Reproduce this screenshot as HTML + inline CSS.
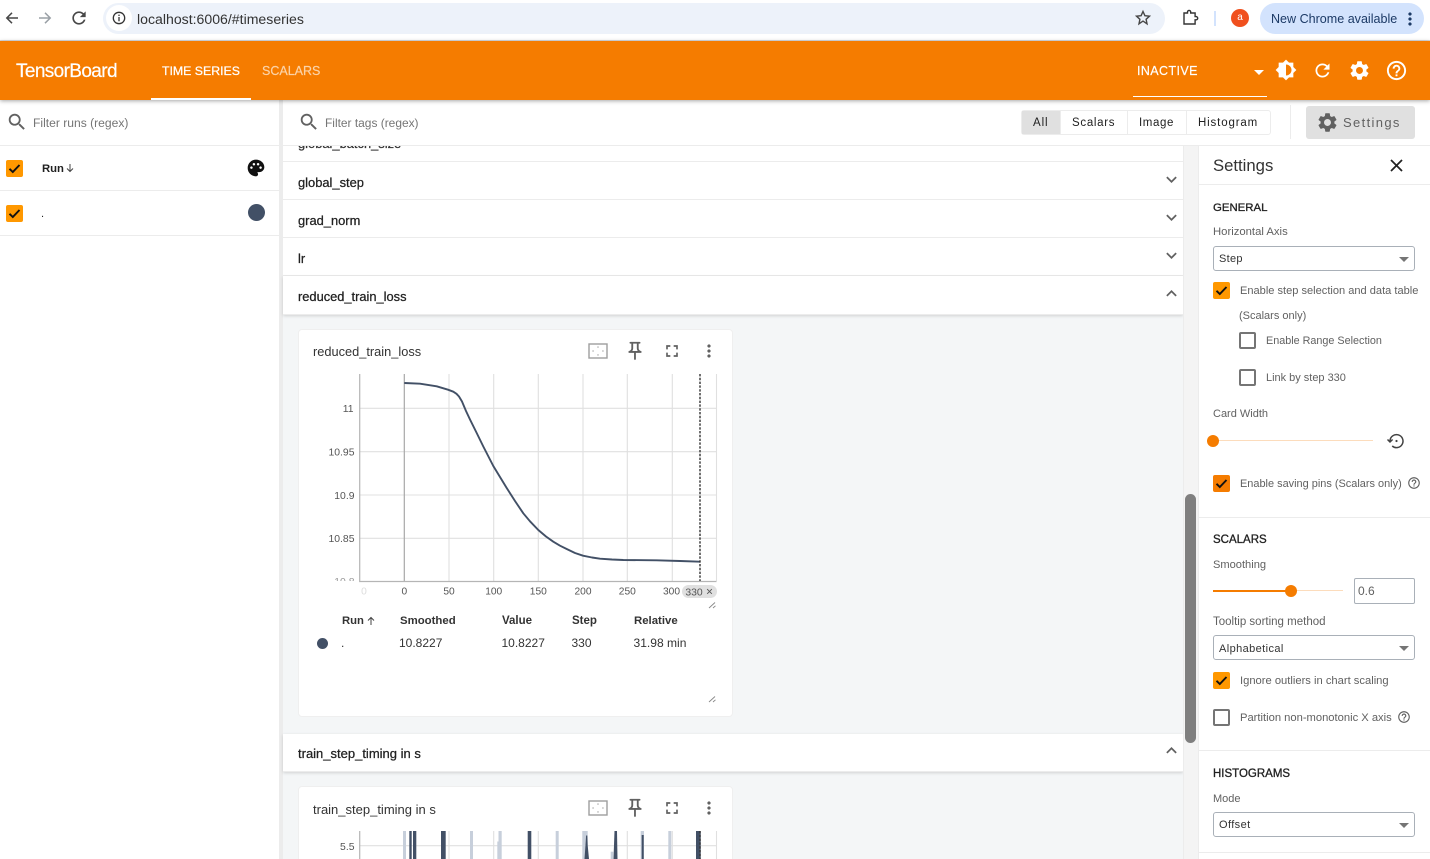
<!DOCTYPE html>
<html><head><meta charset="utf-8"><title>TensorBoard</title>
<style>
html,body{margin:0;padding:0;width:1430px;height:859px;overflow:hidden;background:#fff}
body{font-family:"Liberation Sans",sans-serif;color:#212121;position:relative;filter:blur(.3px)}
div,span.t{position:absolute;box-sizing:border-box}
.t{position:absolute;white-space:nowrap;line-height:20px;font-size:12px;margin-top:1px}
.g{color:#616161}
.b{font-weight:bold}
.ic{position:absolute;display:block}
.cb{position:absolute;width:17px;height:17px;border-radius:2px;background:#ff9800}
.cb svg{position:absolute;left:0;top:0}
.un{position:absolute;width:17px;height:17px;border-radius:2px;border:2px solid #757575;background:#fff}
.sec{left:283px;width:900px;background:#fff;border-bottom:1px solid #ececec}
.card{background:#fff;border:1px solid #efefef;border-radius:4px;left:298px;width:435px}
.sel{background:#fff;border:1px solid #a9b0b8;border-radius:3px;left:1213px;width:202px;height:25px}
.sel:after{content:"";position:absolute;right:5px;top:10px;border-left:5px solid transparent;border-right:5px solid transparent;border-top:5px solid #757575}
</style></head><body>
<svg width="0" height="0" style="position:absolute"><defs>
<symbol id="search" viewBox="0 0 24 24"><path d="M15.5 14h-.79l-.28-.27C15.41 12.59 16 11.11 16 9.5 16 5.91 13.09 3 9.5 3S3 5.91 3 9.5 5.91 16 9.5 16c1.61 0 3.09-.59 4.23-1.57l.27.28v.79l5 4.99L20.49 19l-4.99-5zm-6 0C7.01 14 5 11.99 5 9.5S7.01 5 9.5 5 14 7.01 14 9.5 11.99 14 9.5 14z"/></symbol>
<symbol id="gear" viewBox="0 0 24 24"><path d="M19.14 12.94c.04-.3.06-.61.06-.94 0-.32-.02-.64-.07-.94l2.03-1.58c.18-.14.23-.41.12-.61l-1.92-3.32c-.12-.22-.37-.29-.59-.22l-2.39.96c-.5-.38-1.03-.7-1.62-.94l-.36-2.54c-.04-.24-.24-.41-.48-.41h-3.84c-.24 0-.43.17-.47.41l-.36 2.54c-.59.24-1.13.57-1.62.94l-2.39-.96c-.22-.08-.47 0-.59.22L2.74 8.87c-.12.21-.08.47.12.61l2.03 1.58c-.05.3-.09.63-.09.94s.02.64.07.94l-2.03 1.58c-.18.14-.23.41-.12.61l1.92 3.32c.12.22.37.29.59.22l2.39-.96c.5.38 1.03.7 1.62.94l.36 2.54c.05.24.24.41.48.41h3.84c.24 0 .44-.17.47-.41l.36-2.54c.59-.24 1.13-.56 1.62-.94l2.39.96c.22.08.47 0 .59-.22l1.92-3.32c.12-.22.07-.47-.12-.61l-2.01-1.58zM12 15.6c-1.98 0-3.6-1.62-3.6-3.6s1.62-3.6 3.6-3.6 3.6 1.62 3.6 3.6-1.62 3.6-3.6 3.6z"/></symbol>
<symbol id="refresh" viewBox="0 0 24 24"><path d="M17.65 6.35C16.2 4.9 14.21 4 12 4c-4.42 0-7.99 3.58-7.99 8s3.57 8 7.99 8c3.73 0 6.84-2.55 7.73-6h-2.08c-.82 2.33-3.04 4-5.65 4-3.31 0-6-2.69-6-6s2.69-6 6-6c1.66 0 3.14.69 4.22 1.78L13 11h7V4l-2.35 2.35z"/></symbol>
<symbol id="help" viewBox="0 0 24 24"><path d="M11 18h2v-2h-2v2zm1-16C6.48 2 2 6.48 2 12s4.48 10 10 10 10-4.48 10-10S17.52 2 12 2zm0 18c-4.41 0-8-3.59-8-8s3.59-8 8-8 8 3.59 8 8-3.59 8-8 8zm0-14c-2.21 0-4 1.79-4 4h2c0-1.1.9-2 2-2s2 .9 2 2c0 2-3 1.75-3 5h2c0-2.25 3-2.5 3-5 0-2.21-1.79-4-4-4z"/></symbol>
<symbol id="bright" viewBox="0 0 24 24"><path d="M20 15.31L23.31 12 20 8.69V4h-4.69L12 .69 8.69 4H4v4.69L.69 12 4 15.31V20h4.69L12 23.31 15.31 20H20v-4.69zM12 18V6c3.31 0 6 2.69 6 6s-2.69 6-6 6z"/></symbol>
<symbol id="palette" viewBox="0 0 24 24"><path d="M12 2C6.49 2 2 6.49 2 12s4.49 10 10 10c1.38 0 2.5-1.12 2.5-2.5 0-.61-.23-1.2-.64-1.67-.08-.1-.13-.21-.13-.33 0-.28.22-.5.5-.5H16c3.31 0 6-2.69 6-6 0-4.96-4.49-9-10-9zm5.5 11c-.83 0-1.5-.67-1.5-1.5s.67-1.5 1.5-1.5 1.5.67 1.5 1.5-.67 1.5-1.5 1.5zm-3-4c-.83 0-1.5-.67-1.5-1.5S13.67 6 14.5 6s1.5.67 1.5 1.5S15.33 9 14.5 9zM5 11.5c0-.83.67-1.5 1.5-1.5s1.5.67 1.5 1.5S7.33 13 6.5 13 5 12.33 5 11.5zm6-4c0 .83-.67 1.5-1.5 1.5S8 8.33 8 7.5 8.67 6 9.5 6s1.5.67 1.5 1.5z"/></symbol>
<symbol id="close" viewBox="0 0 24 24"><path d="M19 6.41 17.59 5 12 10.59 6.41 5 5 6.41 10.59 12 5 17.59 6.41 19 12 13.41 17.59 19 19 17.59 13.41 12z"/></symbol>
<symbol id="more" viewBox="0 0 24 24"><path d="M16.59 8.59 12 13.17 7.41 8.59 6 10l6 6 6-6z"/></symbol>
<symbol id="less" viewBox="0 0 24 24"><path d="M12 8l-6 6 1.41 1.41L12 10.83l4.59 4.58L18 14z"/></symbol>
<symbol id="pin" viewBox="0 0 24 24"><path d="M14 4v5c0 1.12.37 2.16 1 3H9c.65-.86 1-1.9 1-3V4h4m3-2H7c-.55 0-1 .45-1 1s.45 1 1 1h1v5c0 1.66-1.34 3-3 3v2h5.97v7l1 1 1-1v-7H19v-2c-1.66 0-3-1.34-3-3V4h1c.55 0 1-.45 1-1s-.45-1-1-1z"/></symbol>
<symbol id="full" viewBox="0 0 24 24"><path d="M7 14H5v5h5v-2H7v-3zm-2-4h2V7h3V5H5v5zm12 7h-3v2h5v-5h-2v3zM14 5v2h3v3h2V5h-5z"/></symbol>
<symbol id="vert" viewBox="0 0 24 24"><path d="M12 8c1.1 0 2-.9 2-2s-.9-2-2-2-2 .9-2 2 .9 2 2 2zm0 2c-1.1 0-2 .9-2 2s.9 2 2 2 2-.9 2-2-.9-2-2-2zm0 6c-1.1 0-2 .9-2 2s.9 2 2 2 2-.9 2-2-.9-2-2-2z"/></symbol>
<symbol id="fit" viewBox="0 0 20 16"><rect x="1" y="1" width="18" height="14" fill="none" stroke="#9e9e9e" stroke-width="1.4"/><path d="M10 3l1 1.5H9zM10 13l1-1.5H9zM4 8l1.5-1v2zM16 8l-1.5-1v2z" fill="#9e9e9e"/></symbol>
<symbol id="check" viewBox="0 0 17 17"><path d="M3.5 8.8l3.3 3.2 6.7-7" fill="none" stroke="#111" stroke-width="1.9"/></symbol>
</defs></svg>

<!-- Chrome bar -->
<div style="left:0;top:0;width:1430px;height:41px;background:#fff;border-bottom:1px solid #dadce0"></div>
<svg class="ic" style="left:3px;top:9px" width="18" height="18" viewBox="0 0 18 18" fill="none" stroke="#474747" stroke-width="1.5"><path d="M15 9H4M9 3.8L3.8 9 9 14.2"/></svg>
<svg class="ic" style="left:36px;top:9px" width="18" height="18" viewBox="0 0 18 18" fill="none" stroke="#9aa0a6" stroke-width="1.5"><path d="M3 9h11M9 3.8L14.2 9 9 14.2"/></svg>
<svg class="ic" style="left:69px;top:8px;fill:#474747" width="20" height="20"><use href="#refresh"/></svg>
<div style="left:103px;top:3px;width:1062px;height:31px;border-radius:16px;background:#edf2fa"></div>
<div style="left:106px;top:5px;width:26px;height:26px;border-radius:13px;background:#fff"></div>
<svg class="ic" style="left:112px;top:11px" width="14" height="14" viewBox="0 0 14 14" fill="none" stroke="#333" stroke-width="1.3"><circle cx="7" cy="7" r="5.7"/><path d="M7 6v4.2M7 3.6v1.4"/></svg>
<span class="t" style="left:137px;top:8px;font-size:14.1px;color:#333">localhost:6006/#timeseries</span>
<svg class="ic" style="left:1134px;top:9px" width="18" height="18" viewBox="0 0 18 18" fill="none" stroke="#474747" stroke-width="1.4"><path d="M9 2.5l1.9 4.2 4.6.5-3.4 3.1.9 4.5L9 12.1l-4 2.7.9-4.5-3.4-3.1 4.6-.5z"/></svg>
<svg class="ic" style="left:1182px;top:9px" width="17" height="17" viewBox="0 0 17 17" fill="none" stroke="#333" stroke-width="1.4"><path d="M2 4h3.5V3a1.6 1.6 0 0 1 3.2 0v1h4.4v3.6h1a1.6 1.6 0 0 1 0 3.2h-1V15H2z" /></svg>
<div style="left:1214px;top:11px;width:2px;height:15px;background:#d3e3fd"></div>
<div style="left:1231px;top:9px;width:18px;height:18px;border-radius:9px;background:#f0501e"></div>
<span class="t" style="left:1231px;width:18px;text-align:center;top:7px;font-size:10px;color:#fff">a</span>
<div style="left:1260px;top:3px;width:164px;height:31px;border-radius:16px;background:#d3e3fd"></div>
<span class="t" style="left:1271px;top:8px;font-size:12.55px;color:#1c3a66">New Chrome available</span>
<svg class="ic" style="left:1400px;top:9px;fill:#1c3a66" width="20" height="20"><use href="#vert"/></svg>

<!-- Header -->
<div style="left:0;top:41px;width:1430px;height:59px;background:#f57c00;box-shadow:0 1px 4px rgba(0,0,0,.35);z-index:3">
<span class="t" style="left:16px;top:20px;font-size:19px;color:#fff;letter-spacing:-.62px;-webkit-text-stroke:.2px #fff">TensorBoard</span>
<span class="t" style="left:162px;top:19px;font-size:12.3px;color:#fff;-webkit-text-stroke:.25px #fff">TIME SERIES</span>
<span class="t" style="left:262px;top:19px;font-size:12.5px;color:#fbd3a8;-webkit-text-stroke:.2px #fbd3a8">SCALARS</span>
<div style="left:151px;top:57px;width:100px;height:2px;background:#fff"></div>
<span class="t" style="left:1137px;top:19px;font-size:12.5px;color:#fff;letter-spacing:.4px;-webkit-text-stroke:.2px #fff">INACTIVE</span>
<div style="left:1254px;top:29px;width:0;height:0;border-left:5px solid transparent;border-right:5px solid transparent;border-top:5px solid #fff"></div>
<div style="left:1133px;top:55px;width:134px;height:1px;background:#fff"></div>
<svg class="ic" style="left:1275px;top:18px;fill:#fff" width="22" height="22"><use href="#bright"/></svg>
<svg class="ic" style="left:1312px;top:19px;fill:#fff" width="21" height="21"><use href="#refresh"/></svg>
<svg class="ic" style="left:1348px;top:18px;fill:#fff" width="23" height="23"><use href="#gear"/></svg>
<svg class="ic" style="left:1385px;top:18px;fill:#fff" width="23" height="23"><use href="#help"/></svg>
</div>

<!-- Left sidebar -->
<div style="left:0;top:100px;width:279px;height:759px;background:#fff"></div>
<div style="left:279px;top:100px;width:4px;height:759px;background:#ececec"></div>
<svg class="ic" style="left:6px;top:111px;fill:#616161" width="22" height="22"><use href="#search"/></svg>
<span class="t" style="left:33px;top:112px;font-size:12.1px;color:#757575">Filter runs (regex)</span>
<div style="left:0;top:145px;width:279px;height:1px;background:#ececec"></div>
<div class="cb" style="left:6px;top:160px"><svg width="17" height="17"><use href="#check"/></svg></div>
<span class="t b" style="left:42px;top:158px;font-size:11.3px">Run</span>
<svg class="ic" style="left:65px;top:163px" width="10" height="10" viewBox="0 0 10 10" fill="none" stroke="#444" stroke-width="1"><path d="M5 1v7.5M2 5.5l3 3 3-3"/></svg>
<svg class="ic" style="left:246px;top:158px;fill:#111" width="20" height="20"><use href="#palette"/></svg>
<div style="left:0;top:190px;width:279px;height:1px;background:#ececec"></div>
<div class="cb" style="left:6px;top:205px"><svg width="17" height="17"><use href="#check"/></svg></div>
<span class="t" style="left:41px;top:203px;font-size:11px">.</span>
<div style="left:248px;top:204px;width:17px;height:17px;border-radius:9px;background:#425066"></div>
<div style="left:0;top:235px;width:279px;height:1px;background:#ececec"></div>

<!-- Main toolbar -->
<div style="left:283px;top:100px;width:1147px;height:46px;background:#fff;border-bottom:1px solid #ececec"></div>
<svg class="ic" style="left:298px;top:111px;fill:#616161" width="22" height="22"><use href="#search"/></svg>
<span class="t" style="left:325px;top:112px;font-size:11.95px;color:#757575">Filter tags (regex)</span>
<div style="left:1021px;top:110px;width:250px;height:25px;border:1px solid #ececec;border-radius:3px;background:#fff"></div>
<div style="left:1022px;top:111px;width:38px;height:23px;background:#e0e0e0"></div>
<div style="left:1127px;top:111px;width:1px;height:23px;background:#ececec"></div>
<div style="left:1060px;top:111px;width:1px;height:23px;background:#ececec"></div>
<div style="left:1186px;top:111px;width:1px;height:23px;background:#ececec"></div>
<span class="t" style="left:1033px;top:112px;font-size:11.5px;letter-spacing:.9px">All</span>
<span class="t" style="left:1072px;top:112px;font-size:11.5px;letter-spacing:.7px">Scalars</span>
<span class="t" style="left:1139px;top:112px;font-size:11.5px;letter-spacing:.6px">Image</span>
<span class="t" style="left:1198px;top:112px;font-size:11.5px;letter-spacing:.85px">Histogram</span>
<div style="left:1290px;top:105px;width:1px;height:34px;background:#ececec"></div>
<div style="left:1306px;top:106px;width:109px;height:33px;border-radius:3px;background:#e0e0e0"></div>
<svg class="ic" style="left:1316px;top:111px;fill:#616161" width="23" height="23"><use href="#gear"/></svg>
<span class="t" style="left:1343px;top:112px;font-size:13px;color:#616161;letter-spacing:1.35px">Settings</span>

<!-- Main content -->
<div style="left:283px;top:146px;width:900px;height:713px;background:#f4f6f7"></div>
<div class="sec" style="top:146px;height:16px;overflow:hidden"><span class="t" style="left:15px;top:-13px;font-size:12.9px;color:#333;-webkit-text-stroke:.25px #333">global_batch_size</span></div>
<div class="sec" style="top:162px;height:38px"><span class="t" style="left:15px;top:10px;font-size:12.9px;-webkit-text-stroke:.25px #212121">global_step</span></div>
<div class="sec" style="top:200px;height:38px"><span class="t" style="left:15px;top:10px;font-size:12.9px;-webkit-text-stroke:.25px #212121">grad_norm</span></div>
<div class="sec" style="top:238px;height:38px"><span class="t" style="left:15px;top:10px;font-size:12.9px;-webkit-text-stroke:.25px #212121">lr</span></div>
<div class="sec" style="top:276px;height:39px;box-shadow:0 1px 3px rgba(0,0,0,.15)"><span class="t" style="left:15px;top:10px;font-size:12.85px;-webkit-text-stroke:.25px #212121">reduced_train_loss</span></div>
<svg class="ic" style="left:1160.5px;top:169px;fill:#616161" width="21" height="21"><use href="#more"/></svg>
<svg class="ic" style="left:1160.5px;top:207px;fill:#616161" width="21" height="21"><use href="#more"/></svg>
<svg class="ic" style="left:1160.5px;top:245px;fill:#616161" width="21" height="21"><use href="#more"/></svg>
<svg class="ic" style="left:1160.5px;top:283px;fill:#616161" width="21" height="21"><use href="#less"/></svg>

<div class="card" style="top:329px;height:388px"></div>
<span class="t" style="left:313px;top:341px;font-size:12.8px;color:#333">reduced_train_loss</span>
<svg class="ic" style="left:588px;top:343px" width="20" height="16"><use href="#fit"/></svg>
<svg class="ic" style="left:624px;top:340px;fill:#616161" width="22" height="22"><use href="#pin"/></svg>
<svg class="ic" style="left:662px;top:341px;fill:#616161" width="20" height="20"><use href="#full"/></svg>
<svg class="ic" style="left:699px;top:341px;fill:#616161" width="20" height="20"><use href="#vert"/></svg>

<!-- Chart 1 -->
<svg class="ic" style="left:0;top:0" width="1430" height="859">
<g stroke="#e0e0e0" stroke-width="1.1" fill="none">
<path d="M360 408.3H716.5M360 451.7H716.5M360 495H716.5M360 538.3H716.5"/>
<path d="M449 374V581M493.7 374V581M538.3 374V581M583 374V581M627.3 374V581M672.3 374V581M716.5 374V581"/>
</g>
<text x="354.5" y="585" font-family="Liberation Sans,sans-serif" font-size="10.4" fill="#999" text-anchor="end">10.8</text>
<rect x="325" y="581" width="34" height="6" fill="#fff"/>
<path d="M404.3 374V581" stroke="#a8a8a8" stroke-width="1.2"/>
<path d="M359.7 374V581.5H716.5" stroke="#b5b5b5" stroke-width="1.2" fill="none"/>
<polyline fill="none" stroke="#425066" stroke-width="1.9" stroke-linejoin="round" points="404.3,383 420,383.7 436.7,386.3 448,389.7 453.3,391.7 456.5,393.8 459,396.5 462,401.5 466,411 470,419.5 476.7,433 483.3,446.5 493.3,466 500,477 506.7,488 515,501 523.3,513.3 530,521.3 538.3,530 546,536.5 553.3,541.7 560,545.7 566.7,549 575,553 583,555.7 592,557.5 600,558.7 612,559.5 623.3,560 656.7,560.3 680,561 700,561.7"/>
<path d="M700 374V581" stroke="#333" stroke-width="1.4" stroke-dasharray="2.4 1.4"/>
<rect x="682" y="585" width="35" height="13" rx="6.5" fill="#e0e0e0"/>
<g font-family="Liberation Sans,sans-serif" font-size="10.4" fill="#555" text-anchor="end">
<text x="353.5" y="412">11</text><text x="354.5" y="455.5">10.95</text><text x="354.5" y="499">10.9</text><text x="354.5" y="542">10.85</text>
</g>
<g font-family="Liberation Sans,sans-serif" font-size="10.2" fill="#555" text-anchor="middle">
<text x="364" y="594.5" fill="#ddd">0</text><text x="404.3" y="594.5">0</text><text x="449" y="594.5">50</text><text x="493.7" y="594.5">100</text><text x="538.3" y="594.5">150</text><text x="583" y="594.5">200</text><text x="627.3" y="594.5">250</text><text x="671.5" y="594.5">300</text>
<text x="694" y="595.5" font-size="10.4">330</text><text x="709.5" y="595.5" font-size="12">×</text>
</g>
<path d="M709 608l6-5.5M713 608l2.5-2.2M709 702l6-5.5M713 702l2.5-2.2" stroke="#888" stroke-width=".9"/>
</svg>

<span class="t b" style="left:342px;top:610px;font-size:11.3px;color:#333">Run</span>
<svg class="ic" style="left:366px;top:616px" width="10" height="10" viewBox="0 0 10 10" fill="none" stroke="#444" stroke-width="1"><path d="M5 9V1.5M2 4.5l3-3 3 3"/></svg>
<span class="t b" style="left:400px;top:610px;font-size:11.4px;color:#333">Smoothed</span>
<span class="t b" style="left:502px;top:610px;font-size:11.5px;color:#333">Value</span>
<span class="t b" style="left:572px;top:610px;font-size:11.5px;color:#333">Step</span>
<span class="t b" style="left:634px;top:610px;font-size:11.4px;color:#333">Relative</span>
<div style="left:317px;top:638px;width:11px;height:11px;border-radius:6px;background:#425066"></div>
<span class="t" style="left:341px;top:632px;font-size:12px;color:#333">.</span>
<span class="t" style="left:399px;top:632px;font-size:12px;color:#333">10.8227</span>
<span class="t" style="left:501.5px;top:632px;font-size:12px;color:#333">10.8227</span>
<span class="t" style="left:571.5px;top:632px;font-size:12px;color:#333">330</span>
<span class="t" style="left:633.5px;top:632px;font-size:12.05px;color:#333">31.98 min</span>

<div class="sec" style="top:734px;height:38px;box-shadow:0 1px 3px rgba(0,0,0,.15)"><span class="t" style="left:15px;top:9px;font-size:13px;-webkit-text-stroke:.25px #212121">train_step_timing in s</span></div>
<svg class="ic" style="left:1160.5px;top:740px;fill:#616161" width="21" height="21"><use href="#less"/></svg>

<div class="card" style="top:786px;height:90px"></div>
<span class="t" style="left:313px;top:799px;font-size:13px;color:#333">train_step_timing in s</span>
<svg class="ic" style="left:588px;top:800px" width="20" height="16"><use href="#fit"/></svg>
<svg class="ic" style="left:624px;top:797px;fill:#616161" width="22" height="22"><use href="#pin"/></svg>
<svg class="ic" style="left:662px;top:798px;fill:#616161" width="20" height="20"><use href="#full"/></svg>
<svg class="ic" style="left:699px;top:798px;fill:#616161" width="20" height="20"><use href="#vert"/></svg>
<svg class="ic" style="left:0;top:0" width="1430" height="859">
<g stroke="#e0e0e0" stroke-width="1.1" fill="none"><path d="M360 845.7H716.5M449 831V859M493.7 831V859M538.3 831V859M583 831V859M627.3 831V859M672.3 831V859M716.5 831V859"/></g>
<path d="M359.7 831V859" stroke="#b5b5b5" stroke-width="1.2"/>
<g fill="#c7cfdb"><rect x="403" y="831" width="3" height="28"/><rect x="470" y="831" width="3" height="28"/><rect x="498.5" y="831" width="3.2" height="28"/><rect x="497.3" y="841.5" width="1.5" height="17.5"/><rect x="555.7" y="831" width="3" height="28"/><rect x="582.3" y="831" width="5.4" height="28"/><rect x="610.7" y="851.7" width="2.6" height="7.3"/><rect x="640.7" y="831" width="3.3" height="28"/><rect x="668.3" y="831" width="3" height="28"/></g>
<g fill="#425066"><rect x="409.3" y="831" width="2.4" height="28"/><rect x="413" y="831" width="3.3" height="28"/><rect x="441" y="831" width="4.7" height="28"/><rect x="527.7" y="831" width="3.6" height="28"/><path d="M584.5 859l1-14 .6-9.5h1.2l.4 10 1.3 13.5z"/><path d="M613.5 859l1-28h2.5l.5 28z"/><rect x="641.7" y="835" width="2" height="24"/><rect x="696" y="831" width="4.7" height="28"/></g>
<path d="M700 831V859" stroke="#333" stroke-width="1.4" stroke-dasharray="2.4 1.4"/>
<text x="354.5" y="850" font-family="Liberation Sans,sans-serif" font-size="10.4" fill="#555" text-anchor="end">5.5</text>
</svg>

<!-- Scrollbar -->
<div style="left:1183px;top:146px;width:15px;height:713px;background:#f4f4f4;border-left:1px solid #ececec"></div>
<div style="left:1185px;top:494px;width:11px;height:249px;border-radius:6px;background:#7f7f7f"></div>

<!-- Settings panel -->
<div style="left:1198px;top:146px;width:232px;height:713px;background:#fff;border-left:1px solid #ececec"></div>
<div style="left:1198px;top:184px;width:232px;height:1px;background:#ececec"></div>
<span class="t" style="left:1213px;top:155px;font-size:16.7px;color:#333">Settings</span>
<svg class="ic" style="left:1386px;top:155px;fill:#222" width="21" height="21"><use href="#close"/></svg>
<span class="t" style="left:1213px;top:197px;font-size:11.4px;-webkit-text-stroke:.3px #212121">GENERAL</span>
<span class="t g" style="left:1213px;top:221px;font-size:11.3px">Horizontal Axis</span>
<div class="sel" style="top:246px"></div>
<span class="t" style="left:1219px;top:248px;font-size:11px;color:#333;letter-spacing:.3px">Step</span>
<div class="cb" style="left:1213px;top:282px"><svg width="17" height="17"><use href="#check"/></svg></div>
<span class="t g" style="left:1240px;top:280px;font-size:11.07px">Enable step selection and data table</span>
<span class="t g" style="left:1239px;top:305px;font-size:11px">(Scalars only)</span>
<div class="un" style="left:1239px;top:332px"></div>
<span class="t g" style="left:1266px;top:330px;font-size:10.8px">Enable Range Selection</span>
<div class="un" style="left:1239px;top:369px"></div>
<span class="t g" style="left:1266px;top:367px;font-size:10.97px">Link by step 330</span>
<span class="t g" style="left:1213px;top:403px;font-size:11px">Card Width</span>
<div style="left:1213px;top:440px;width:160px;height:1px;background:#fcdcbc"></div>
<div style="left:1207px;top:435px;width:12px;height:12px;border-radius:6px;background:#f57c00"></div>
<svg class="ic" style="left:1386px;top:431px" width="20" height="20" viewBox="0 0 20 20" fill="none" stroke="#424242" stroke-width="1.5"><path d="M4 10a6.5 6.5 0 1 1 2.2 5"/><path d="M1.5 8.5L4 11l2.6-2.5" /><circle cx="10.5" cy="10" r="1.1" fill="#424242" stroke="none"/></svg>
<div class="cb" style="left:1213px;top:475px;background:#f57c00"><svg width="17" height="17"><use href="#check"/></svg></div>
<span class="t g" style="left:1240px;top:473px;font-size:10.95px">Enable saving pins (Scalars only)</span>
<svg class="ic" style="left:1407px;top:476px;fill:#616161" width="14" height="14"><use href="#help"/></svg>
<div style="left:1198px;top:517px;width:232px;height:1px;background:#ececec"></div>

<span class="t" style="left:1213px;top:529px;font-size:11.5px;-webkit-text-stroke:.3px #212121">SCALARS</span>
<span class="t g" style="left:1213px;top:554px;font-size:11.1px">Smoothing</span>
<div style="left:1213px;top:590px;width:78px;height:2px;background:#f57c00"></div>
<div style="left:1291px;top:590px;width:52px;height:1px;background:#fcdcbc"></div>
<div style="left:1285px;top:585px;width:12px;height:12px;border-radius:6px;background:#f57c00"></div>
<div style="left:1354px;top:578px;width:61px;height:26px;border:1px solid #a9b0b8;border-radius:2px;background:#fff"></div>
<span class="t" style="left:1358px;top:580px;font-size:12px;color:#616161">0.6</span>
<span class="t g" style="left:1213px;top:611px;font-size:11.5px">Tooltip sorting method</span>
<div class="sel" style="top:635px"></div>
<span class="t" style="left:1219px;top:638px;font-size:11px;color:#333;letter-spacing:.4px">Alphabetical</span>
<div class="cb" style="left:1213px;top:672px"><svg width="17" height="17"><use href="#check"/></svg></div>
<span class="t g" style="left:1240px;top:670px;font-size:11.2px">Ignore outliers in chart scaling</span>
<div class="un" style="left:1213px;top:709px"></div>
<span class="t g" style="left:1240px;top:707px;font-size:11.2px">Partition non-monotonic X axis</span>
<svg class="ic" style="left:1397px;top:710px;fill:#616161" width="14" height="14"><use href="#help"/></svg>
<div style="left:1198px;top:750px;width:232px;height:1px;background:#ececec"></div>

<span class="t" style="left:1213px;top:763px;font-size:11.5px;-webkit-text-stroke:.3px #212121">HISTOGRAMS</span>
<span class="t g" style="left:1213px;top:788px;font-size:11px">Mode</span>
<div class="sel" style="top:812px"></div>
<span class="t" style="left:1219px;top:814px;font-size:11px;color:#333;letter-spacing:.4px">Offset</span>
<div style="left:1198px;top:852px;width:232px;height:1px;background:#ececec"></div>
</body></html>
